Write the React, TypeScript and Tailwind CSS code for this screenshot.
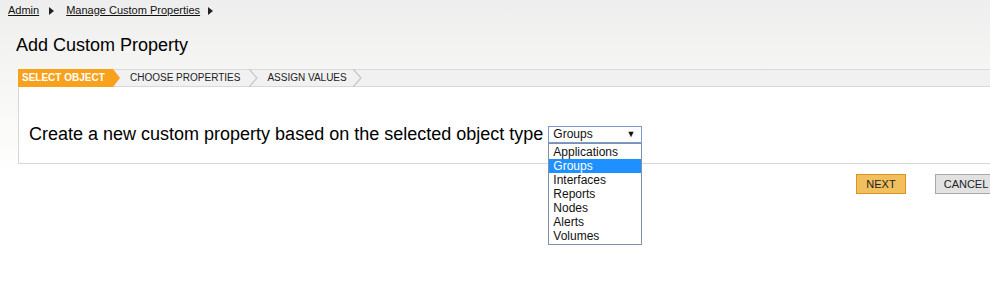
import React from "react";

const options = ["Applications", "Groups", "Interfaces", "Reports", "Nodes", "Alerts", "Volumes"];

function Chevron() {
  return (
    <svg width="10" height="18" viewBox="0 0 10 18" className="shrink-0">
      <polyline points="1,0 9,9 1,18" fill="none" stroke="#c8c8c8" strokeWidth="1.3" />
    </svg>
  );
}

function Caret() {
  return (
    <svg width="5" height="8" viewBox="0 0 5 8" className="shrink-0">
      <polygon points="0,0 5,4 0,8" fill="#222" />
    </svg>
  );
}

export default function App() {
  return (
    <div
      className="relative h-[294px] w-[990px] overflow-hidden bg-gradient-to-b from-[#eeeeee] via-[#f7f7f5] via-30% to-white to-60% text-[#111]"
      style={{ fontFamily: '"Liberation Sans", Arial, sans-serif' }}
    >
      <div className="w-[1010px]">
        {/* breadcrumb */}
        <div className="flex h-[20px] items-center pl-[8px] pt-[1px] text-[11px] leading-none">
          <a className="underline">Admin</a>
          <span className="ml-[10px] mr-[12px]">
            <Caret />
          </span>
          <a className="underline">Manage Custom Properties</a>
          <span className="ml-[8px]">
            <Caret />
          </span>
        </div>

        <h1 className="pl-[16px] pt-[15px] text-[18px] leading-[20px] text-black">Add Custom Property</h1>

        {/* steps */}
        <div className="ml-[18px] mt-[14px] flex h-[18px] items-center border-y border-[#d9d9d9] bg-[#f1f1f1] text-[10px] leading-none">
          <div
            className="-my-px flex h-[18px] w-[102px] items-center pl-[4px] font-bold text-white bg-[#f7a11c]"
            style={{ clipPath: "polygon(0 0, 95px 0, 102px 50%, 95px 100%, 0 100%)" }}
          >
            SELECT OBJECT
          </div>
          <span className="ml-[10px] mr-[8px] text-[#222]">CHOOSE PROPERTIES</span>
          <Chevron />
          <span className="ml-[9px] mr-[5px] text-[#222]">ASSIGN VALUES</span>
          <Chevron />
        </div>

        {/* panel */}
        <div className="relative ml-[18px] h-[77px] border-b border-l border-[#d8d8d8] bg-white">
          <div className="flex items-center pl-[10px] pt-[38px]">
            <span className="text-[18px] leading-[18px] text-black">
              Create a new custom property based on the selected object type
            </span>
            <div className="relative ml-[5px]">
              <div className="flex h-[17px] w-[94px] items-center justify-between border border-[#7a9ad0] bg-white pl-[4px] pr-[6px] text-[12px] leading-none">
                <span>Groups</span>
                <span className="text-[9px]">▼</span>
              </div>
              <div className="absolute left-0 top-[17px] z-10 w-[94px] border border-[#7f8fae] bg-white py-px text-[12px] leading-[14px]">
                {options.map((o) => (
                  <div
                    key={o}
                    className={
                      o === "Groups" ? "bg-[#1e90ff] pl-[4px] text-white" : "pl-[4px] text-[#111]"
                    }
                  >
                    {o}
                  </div>
                ))}
              </div>
            </div>
          </div>
        </div>

        {/* buttons */}
        <div className="mt-[10px] flex gap-[29px] pl-[856px] text-[11px] leading-none">
          <button className="h-[20px] w-[50px] border border-[#e0921c] bg-[#f1bf5e] text-[#222]">NEXT</button>
          <button className="h-[20px] w-[62px] border border-[#a8a8a8] bg-[#e2e2e2] text-[#222]">CANCEL</button>
        </div>
      </div>
    </div>
  );
}
